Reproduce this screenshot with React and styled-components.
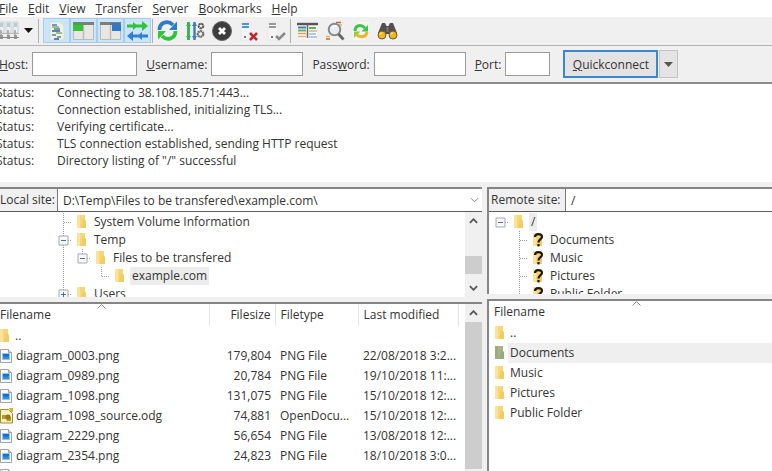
/**
 *
 * App
 *
 */

import React from 'react';
import styled, { createGlobalStyle } from 'styled-components';

const GlobalStyle = createGlobalStyle`
  * {
    box-sizing: border-box;
  }

  body {
    background: #fff;
    color: #333;
    font-family: "Open Sans", "Noto Sans", sans-serif;
    font-size: 12px;
    margin: 0;
    overflow: hidden;
  }

  button, input, select {
    color: inherit;
    font: inherit;
  }
`;

const Shell = styled.div`
  background: #f0f0f0;
  display: flex;
  flex-direction: column;
  height: 100vh;
  margin-left: -4px;
  overflow: hidden;
`;

const MenuBar = styled.nav`
  background: #fff;
  display: flex;
  gap: 10px;
  height: 17px;
  padding-left: 3px;
`;

const MenuItem = styled.button`
  background: none;
  border: 0;
  line-height: 16px;
  padding: 0;
`;

const ToolBar = styled.div`
  align-items: center;
  border-bottom: 1px solid #b4b4b4;
  display: flex;
  height: 29px;
  padding-bottom: 1px;
`;

const ToolButton = styled.button`
  align-items: center;
  background: ${props => props.$pressed ? '#cce4f7' : 'none'};
  border: ${props => props.$pressed ? '1px solid #a6cdf0' : '0'};
  display: flex;
  flex: none;
  height: 25px;
  justify-content: center;
  padding: 0;
  width: ${props => props.$width || 27}px;
`;

const Separator = styled.div`
  background: #b0b0b0;
  height: 24px;
  margin: 0 ${props => props.$after || 1}px 0 1px;
  width: 1px;
`;

const ConnectBar = styled.form`
  align-items: center;
  border-bottom: 2px solid #8c8c8c;
  display: flex;
  height: 38px;
  padding-left: 3px;
`;

const Field = styled.label`
  align-items: center;
  display: flex;
  gap: 4px;
  margin-right: 9px;
`;

const FieldInput = styled.input`
  background: #fff;
  border: 1px solid #9a9a9a;
  height: 24px;
  padding: 0 4px;
  width: ${props => props.$width}px;
`;

const ConnectButton = styled.button`
  background: #e3e3e3;
  border: 2px solid #3a87cf;
  height: 28px;
  margin-left: 4px;
  padding: 0;
  width: 95px;
`;

const HistoryButton = styled.button`
  align-items: center;
  background: #e4e4e4;
  border: 1px solid #c4c4c4;
  display: flex;
  height: 28px;
  justify-content: center;
  margin-left: 1px;
  padding: 0;
  width: 19px;
`;

const Log = styled.div`
  background: #fff;
  flex: none;
  height: 98px;
  line-height: 17px;
`;

const LogLine = styled.div`
  display: grid;
  grid-template-columns: 61px 1fr;
`;

const Panes = styled.div`
  display: grid;
  flex: 1;
  gap: 5px;
  grid-template-columns: 486fr 285fr;
  min-height: 0;
  padding-top: 5px;
`;

const Pane = styled.section`
  display: flex;
  flex-direction: column;
  min-height: 0;
  min-width: 0;
`;

const Box = styled.div`
  background: #fff;
  border-left: 2px solid #858585;
  border-top: 2px solid #858585;
  display: flex;
  flex-direction: column;
  min-height: 0;
`;

const TopBox = styled(Box)`
  flex: none;
  height: ${props => props.$height}px;
  margin-bottom: ${props => props.$gap}px;
`;

const FileBox = styled(Box)`
  flex: 1;
  flex-direction: row;
  overflow: hidden;
`;

const SiteRow = styled.div`
  border-bottom: 1px solid #5c5c5c;
  display: flex;
  flex: none;
  height: 23px;
`;

const SiteLabel = styled.label`
  background: #f0f0f0;
  border-right: 1px solid #777;
  line-height: 22px;
  padding-left: 2px;
  white-space: nowrap;
  width: ${props => props.$width}px;
`;

const SitePath = styled.div`
  align-items: center;
  display: flex;
  flex: 1;
  min-width: 0;
  padding-right: 3px;
`;

const SiteSelect = styled.select`
  appearance: none;
  background: none;
  border: 0;
  flex: 1;
  height: 22px;
  min-width: 0;
  outline: 0;
  padding: 0 5px;
`;

const TreeArea = styled.div`
  display: flex;
  flex: 1;
  min-height: 0;
  overflow: hidden;
`;

const Tree = styled.div`
  flex: 1;
  min-width: 0;
  padding: 1px 0 0 ${props => props.$left}px;
`;

const TreeRow = styled.div`
  display: flex;
  height: 18px;
`;

const TreeIcon = styled.span`
  flex: none;
  padding: 2px 0 0 3px;
  width: 19px;
`;

const TreeName = styled.span`
  background: ${props => props.$selected ? '#ececec' : 'none'};
  line-height: 18px;
  padding: 0 2px;
`;

const ScrollBar = styled.div`
  background: #f0f0f0;
  display: flex;
  flex: none;
  flex-direction: column;
  width: 17px;
`;

const ScrollButton = styled.button`
  align-items: center;
  background: none;
  border: 0;
  display: flex;
  flex: none;
  height: 18px;
  justify-content: center;
  padding: 0;
`;

const ScrollThumb = styled.div`
  background: #cdcdcd;
  flex: ${props => props.$fill ? '1' : 'none'};
  height: 18px;
  margin: ${props => props.$fill ? '0 0 2px' : 'auto 0 5px'};
`;

const TableWrapper = styled.div`
  flex: 1;
  min-width: 0;
  position: relative;
`;

const FileTable = styled.table`
  border-collapse: collapse;
  table-layout: fixed;
  width: 100%;
`;

const HeadCell = styled.th`
  border-right: ${props => props.$last ? '0' : '1px solid #e5e5e5'};
  font-weight: 400;
  height: 22px;
  line-height: 22px;
  padding: 0 ${props => props.$right ? 4 : 5}px;
  padding-left: ${props => props.$left || 5}px;
  text-align: ${props => props.$right ? 'right' : 'left'};
`;

const Cell = styled.td`
  height: 20px;
  line-height: 20px;
  padding: 0 ${props => props.$right ? 4 : 0}px 0 ${props => props.$right ? 0 : 5}px;
  text-align: ${props => props.$right ? 'right' : 'left'};
  white-space: nowrap;
`;

const NameCell = styled.td`
  padding: 0 0 0 ${props => props.$left}px;
`;

const NameInner = styled.div`
  align-items: center;
  display: flex;
  height: 20px;

  svg {
    flex: none;
  }
`;

const Name = styled.span`
  background: ${props => props.$selected ? '#efefef' : 'none'};
  flex: 1;
  line-height: 20px;
  padding-left: 2px;
  white-space: nowrap;
`;

const SortMark = styled.svg`
  left: ${props => props.$left}px;
  position: absolute;
  top: 0;
`;

/* icons */

const FolderIcon = ({ selected, unknown }) => (
  <svg width="14" height="14" viewBox="0 0 14 14">
    <path d="M1 0h8v5l1 1v7H1z" fill={selected ? '#a9b585' : '#f6d675'} />
    <path d="M1 0h3v13H1z" fill={selected ? '#9bab7c' : '#fbe49a'} />
    <path d="M7 4l3 2v7H5z" fill={selected ? '#93a574' : '#efc75c'} opacity=".7" />
    {unknown && (
      <g fill="none" stroke="#1c1808" strokeWidth="2.2">
        <path d="M3 4C3 0.200 10 0.200 10 3.800C10 6.400 6.500 6 6.500 9.500" />
        <path d="M6.500 11v2.400" />
      </g>
    )}
  </svg>
);

const PngIcon = () => (
  <svg width="15" height="16" viewBox="0 0 15 16">
    <path d="M1.500 1.500h8l3 3v10h-11z" fill="#fafafa" stroke="#a2a2a2" />
    <path d="M9.500 1.500v3h3" fill="#ddd" stroke="#a2a2a2" />
    <path d="M3.500 5.500h7v6h-7z" fill="#2f8fe6" stroke="#8cc4f2" />
    <path d="M4 6h6v2l-3 1-3-1z" fill="#1c6fc4" />
  </svg>
);

const OdgIcon = () => (
  <svg width="15" height="16" viewBox="0 0 15 16">
    <path d="M1.500 1.500h8l4 4v9.500h-12z" fill="#f4eec2" stroke="#a08d2c" />
    <path d="M10 0h4v4h-2z" fill="#d6b32b" />
    <path d="M3 7h5l1 2h3v4H8l-1-2H3z" fill="#b89a1e" />
    <circle cx="9" cy="9" r="2.500" fill="#8c7a1b" />
  </svg>
);

const Chevron = ({ up, size = 9, color = '#555', weight = 2 }) => (
  <svg width={size} height="6" viewBox="0 0 10 6">
    <path d={up ? 'M1 5l4-4 4 4' : 'M1 1l4 4 4-4'} fill="none" stroke={color} strokeWidth={weight} />
  </svg>
);

const Arrow = ({ color = '#111' }) => (
  <svg width="9" height="5" viewBox="0 0 9 5">
    <path d="M0 0h9L4.500 5z" fill={color} />
  </svg>
);

const SitesIcon = () => (
  <svg width="22" height="20" viewBox="0 0 22 20">
    {[2, 9, 16].map(x => (
      <g key={x}>
        <path d={`M${x} 1h5v11h-5z`} fill="#eef0f2" stroke="#c2c7cb" strokeWidth=".8" />
        <path d={`M${x + 1} 3h3M${x + 1} 5h3`} stroke="#7fa3c9" />
        <path d={`M${x + 2} 9v8`} stroke="#777" />
        <path d={`M${x + 1} 14h3v4h-3z`} fill="#999" />
      </g>
    ))}
    <path d="M0 16.500h22" stroke="#888" />
    <path d="M0 12.500h22" stroke="#b5b5b5" />
  </svg>
);

const LogIcon = () => (
  <svg width="20" height="20" viewBox="0 0 20 20">
    <path d="M3 1h10l4 4v14H3z" fill="#edf1e8" stroke="#ccd6d8" strokeWidth=".7" />
    <path d="M5 4h5M7 8h6M5 14h4M10 16h4" stroke="#4c82a8" strokeWidth="1.500" />
    <path d="M5 6h7M9 12h6" stroke="#8caa62" strokeWidth="1.300" />
    <path d="M5 10h8M7 18h5" stroke="#345f91" strokeWidth="1.300" />
  </svg>
);

const PaneIcon = ({ remote }) => (
  <svg width="21" height="20" viewBox="0 0 21 20">
    <path d="M.5 1.500h20v17H.500z" fill="#e9e7e4" stroke="#bbb" />
    <path d="M10.500 4v15" stroke="#bbb" strokeWidth="1.500" />
    {remote
      ? <path d="M12 4h9v6h-9z" fill="#2879cf" />
      : <path d="M0 4h10v6H0z" fill="#35c437" />}
    <path d="M0 1h21v3H0z" fill="#7d7d7d" />
    {remote
      ? <path d="M11 2h9v2h-9z" fill="#3f74ac" />
      : <path d="M1 2h9v2H1z" fill="#4ba04d" />}
  </svg>
);

const QueueIcon = () => (
  <svg width="21" height="20" viewBox="0 0 21 20">
    <path d="M0 3.500h6V1l3 2.500h6V0l6 5-6 5V6.500H9L6 9V6.500H0z" fill="#2fc43a" />
    <path d="M21 13.500h-6V11l-3 2.500H6V10l-6 5 6 5v-3.500h6l3 2.500v-2.500h6z" fill="#2e7fd1" />
  </svg>
);

const RefreshIcon = () => (
  <svg width="21" height="21" viewBox="0 0 21 21">
    <path d="M2.500 10C2.500 2 11 0 16 5" fill="none" stroke="#2b7cc9" strokeWidth="3.800" />
    <path d="M20 1.500v8.500h-8z" fill="#2b7cc9" />
    <path d="M18.500 11C18.500 19 10 21 5 16" fill="none" stroke="#2fc43a" strokeWidth="3.800" />
    <path d="M1 19.500v-8.500h8z" fill="#2fc43a" />
  </svg>
);

const SyncIcon = () => (
  <svg width="18" height="20" viewBox="0 0 18 20">
    <path d="M5 1h12v13H5z" fill="#faf8e6" />
    <path d="M1 5h12v14H1z" fill="#f7f7f7" />
    <path d="M3 10C3 4 9 3 13 7" fill="none" stroke="#3cc353" strokeWidth="3" />
    <path d="M16 4v6.500h-6.500z" fill="#3cc353" />
    <path d="M15 11C14.500 16 9 17 5 14" fill="none" stroke="#ecb52b" strokeWidth="3" />
    <path d="M2 17v-6.500h6.500z" fill="#9ccb35" />
  </svg>
);

const ProcessIcon = () => (
  <svg width="20" height="20" viewBox="0 0 20 20">
    <path d="M3.500 1v18M9.500 1v18" stroke="#397fc2" strokeWidth="2.400" />
    <path d="M3.500 1v18" stroke="#32b84a" strokeWidth="2.400" />
    <path d="M1 5l2.500-4L6 5zM1 15l2.500 4L6 15z" fill="#32b84a" />
    <path d="M7 5l2.500-4L12 5zM7 15l2.500 4 2.500-4z" fill="#397fc2" />
    <circle cx="16" cy="5" r="2.300" fill="none" stroke="#555" strokeWidth="2" strokeDasharray="2 .5" />
    <circle cx="15.500" cy="13" r="2.800" fill="none" stroke="#6a6a6a" strokeWidth="2.200" strokeDasharray="2 .5" />
  </svg>
);

const CancelIcon = () => (
  <svg width="20" height="20" viewBox="0 0 20 20">
    <circle cx="10" cy="10" r="9.500" fill="#3d3d3d" stroke="#666" />
    <path d="M7 7l6 6M13 7l-6 6" stroke="#fff" strokeWidth="2.800" />
  </svg>
);

const ServerIcon = ({ ok }) => (
  <svg width="20" height="20" viewBox="0 0 20 20">
    <path d="M2 1h10v18H2z" fill="#f4f4f5" stroke="#e2e2e2" strokeWidth=".7" />
    <path d="M3 3h7M3 6h7" stroke={ok ? '#989898' : '#4b94d9'} strokeWidth="2" />
    <path d="M5 15h2v2H5z" fill="#777" />
    {ok
      ? <path d="M10 15l3 3 6-6" fill="none" stroke="#8a8a8a" strokeWidth="2.600" />
      : <path d="M11 12l7 7M18 12l-7 7" stroke="#c1262e" strokeWidth="2.600" />}
  </svg>
);

const FilterIcon = () => (
  <svg width="21" height="18" viewBox="0 0 21 18">
    <path d="M1 4h19v13H1z" fill="#fafaf6" />
    <path d="M0 2h21" stroke="#555" strokeWidth="2.400" />
    <path d="M10.500 2v14" stroke="#666" strokeWidth="1.500" />
    <path d="M1 5.500h8" stroke="#4778b4" strokeWidth="2" />
    <path d="M1 8.500h8M12 6h7" stroke="#58b756" strokeWidth="2" />
    <path d="M1 11.500h8" stroke="#d9a54a" strokeWidth="1.500" />
    <path d="M1 14.500h8M12 9h8" stroke="#e3a9a9" strokeWidth="1.500" />
    <path d="M12 12h7M12 15h8" stroke="#9bb7df" strokeWidth="1.500" />
  </svg>
);

const SearchIcon = () => (
  <svg width="20" height="20" viewBox="0 0 20 20">
    <path d="M11 1.500h5M1 18h4" stroke="#d65b3c" strokeWidth="1.500" />
    <path d="M13 4h4M1 15.500h4" stroke="#d5b94d" strokeWidth="1.500" />
    <circle cx="9.500" cy="8.500" r="5.800" fill="#e9edf0" stroke="#888" strokeWidth="2" />
    <path d="M7 7.500c1-2 3-3 5-2" fill="none" stroke="#fff" strokeWidth="1.500" />
    <path d="M13.500 13l5 5.500" stroke="#666" strokeWidth="2.800" />
  </svg>
);

const BinocularsIcon = () => (
  <svg width="21" height="18" viewBox="0 0 21 18">
    <path d="M5 1h3l1.500 3h2L13 1h3l4 10-4 4-4-3H9l-4 3-4-4z" fill="#505050" />
    <path d="M9.500 5h2v5h-2z" fill="#777" />
    <circle cx="5" cy="13" r="4" fill="#f1b51e" stroke="#6b5c30" />
    <circle cx="16" cy="13" r="4" fill="#f1b51e" stroke="#6b5c30" />
    <path d="M3 12l2-1M14 12l2-1" stroke="#ffe58a" strokeWidth="1.500" />
  </svg>
);

const GUIDES = {
  line: 'M9.500 0v18',
  tee: 'M9.500 0v18M10 9.500h8',
  elbow: 'M9.500 0v9.500h8',
  root: 'M10 9.500h8',
};

const Guide = ({ kind, box }) => (
  <svg width="19" height="18" viewBox="0 0 19 18">
    <path d={GUIDES[kind]} fill="none" stroke="#999" strokeDasharray="1 1" />
    {box && (
      <g>
        <path d="M5 5h9v9H5z" fill="#f7f8fa" stroke="#a3abb6" />
        <path d={box === 'plus' ? 'M7 9.500h5M9.500 7v5' : 'M7 9.500h5'} stroke="#4f6ca3" />
      </g>
    )}
  </svg>
);

/* data */

const menus = [['', 'F', 'ile'], ['', 'E', 'dit'], ['', 'V', 'iew'], ['', 'T', 'ransfer'], ['', 'S', 'erver'], ['', 'B', 'ookmarks'], ['', 'H', 'elp']];

const fields = [
  { id: 'host', text: ['', 'H', 'ost:'], width: 105 },
  { id: 'user', text: ['', 'U', 'sername:'], width: 92 },
  { id: 'pass', text: ['Pass', 'w', 'ord:'], width: 92 },
  { id: 'port', text: ['', 'P', 'ort:'], width: 45 },
];

const messages = [
  'Connecting to 38.108.185.71:443...',
  'Connection established, initializing TLS...',
  'Verifying certificate...',
  'TLS connection established, sending HTTP request',
  'Directory listing of "/" successful',
];

const localTree = [
  { name: 'System Volume Information', guides: [['tee']] },
  { name: 'Temp', guides: [['tee', 'minus']] },
  { name: 'Files to be transfered', guides: [['line'], ['elbow', 'minus']] },
  { name: 'example.com', guides: [['line'], [''], ['elbow']], selected: true },
  { name: 'Users', guides: [['tee', 'plus']] },
];

const remoteTree = [
  { name: '/', guides: [['root', 'minus']], selected: true },
  { name: 'Documents', guides: [[''], ['tee']], unknown: true },
  { name: 'Music', guides: [[''], ['tee']], unknown: true },
  { name: 'Pictures', guides: [[''], ['tee']], unknown: true },
  { name: 'Public Folder', guides: [[''], ['tee']], unknown: true },
];

const localFiles = [
  ['..', '', '', '', FolderIcon],
  ['diagram_0003.png', '179,804', 'PNG File', '22/08/2018 3:2...', PngIcon],
  ['diagram_0989.png', '20,784', 'PNG File', '19/10/2018 11:...', PngIcon],
  ['diagram_1098.png', '131,075', 'PNG File', '15/10/2018 12:...', PngIcon],
  ['diagram_1098_source.odg', '74,881', 'OpenDocu...', '15/10/2018 12:...', OdgIcon],
  ['diagram_2229.png', '56,654', 'PNG File', '13/08/2018 12:...', PngIcon],
  ['diagram_2354.png', '24,823', 'PNG File', '18/10/2018 3:0...', PngIcon],
  ['', '', '', '', PngIcon],
];

const remoteFiles = ['..', 'Documents', 'Music', 'Pictures', 'Public Folder'];

const Mnemonic = ({ text }) => (
  <span>{text[0]}<u>{text[1]}</u>{text[2]}</span>
);

const TreeView = ({ rows, left }) => (
  <Tree $left={left}>
    {rows.map(row => (
      <TreeRow key={row.name}>
        {row.guides.map(([kind, box], i) => <Guide key={i} kind={kind} box={box} />)}
        <TreeIcon><FolderIcon unknown={row.unknown} /></TreeIcon>
        <TreeName $selected={row.selected}>{row.name}</TreeName>
      </TreeRow>
    ))}
  </Tree>
);

const Sort = ({ left }) => (
  <SortMark $left={left} width="9" height="5" viewBox="0 0 9 5">
    <path d="M.5 4.500l4-4 4 4" fill="none" stroke="#888" />
  </SortMark>
);

class App extends React.Component {

  constructor(props) {
    super(props)

    this.state = {
      selected: 'Documents',
    }
  }

  renderLocal() {
    return (
      <Pane>
        <TopBox $height={110} $gap={5}>
          <SiteRow>
            <SiteLabel htmlFor="local" $width={60}>Local site:</SiteLabel>
            <SitePath>
              <SiteSelect id="local">
                <option>D:\Temp\Files to be transfered\example.com\</option>
              </SiteSelect>
              <Chevron color="#777" weight={1} />
            </SitePath>
          </SiteRow>
          <TreeArea>
            <TreeView rows={localTree} left={56} />
            <ScrollBar>
              <ScrollButton aria-label="Scroll up"><Chevron up /></ScrollButton>
              <ScrollThumb />
              <ScrollButton aria-label="Scroll down"><Chevron /></ScrollButton>
            </ScrollBar>
          </TreeArea>
        </TopBox>
        <FileBox>
          <TableWrapper>
            <Sort left={99} />
            <FileTable>
              <colgroup>
                <col />
                <col width="66" />
                <col width="83" />
                <col width="100" />
                <col width="7" />
              </colgroup>
              <thead>
                <tr>
                  <HeadCell $left={2}>Filename</HeadCell>
                  <HeadCell $right>Filesize</HeadCell>
                  <HeadCell>Filetype</HeadCell>
                  <HeadCell>Last modified</HeadCell>
                  <HeadCell $last />
                </tr>
              </thead>
              <tbody>
                {localFiles.map(([name, size, type, modified, Icon]) => (
                  <tr key={name}>
                    <NameCell $left={1}>
                      <NameInner><Icon /><Name>{name}</Name></NameInner>
                    </NameCell>
                    <Cell $right>{size}</Cell>
                    <Cell>{type}</Cell>
                    <Cell>{modified}</Cell>
                    <td />
                  </tr>
                ))}
              </tbody>
            </FileTable>
          </TableWrapper>
          <ScrollBar>
            <ScrollButton aria-label="Scroll up"><Chevron up /></ScrollButton>
            <ScrollThumb $fill />
          </ScrollBar>
        </FileBox>
      </Pane>
    );
  }

  renderRemote() {
    return (
      <Pane>
        <TopBox $height={107} $gap={5}>
          <SiteRow>
            <SiteLabel htmlFor="remote" $width={77}>Remote site:</SiteLabel>
            <SitePath>
              <SiteSelect id="remote">
                <option>/</option>
              </SiteSelect>
            </SitePath>
          </SiteRow>
          <TreeArea>
            <TreeView rows={remoteTree} left={2} />
          </TreeArea>
        </TopBox>
        <FileBox>
          <TableWrapper>
            <Sort left={143} />
            <FileTable>
              <thead>
                <tr><HeadCell $last>Filename</HeadCell></tr>
              </thead>
              <tbody>
                {remoteFiles.map(name => {
                  const selected = name === this.state.selected;

                  return (
                    <tr key={name} onClick={() => this.setState({ selected: name })}>
                      <NameCell $left={5}>
                        <NameInner>
                          <FolderIcon selected={selected} />
                          <Name $selected={selected}>{name}</Name>
                        </NameInner>
                      </NameCell>
                    </tr>
                  );
                })}
              </tbody>
            </FileTable>
          </TableWrapper>
        </FileBox>
      </Pane>
    );
  }

  render() {
    return (
      <Shell>
        <GlobalStyle />
        <MenuBar>
          {menus.map(text => (
            <MenuItem key={text[2]}><Mnemonic text={text} /></MenuItem>
          ))}
        </MenuBar>
        <ToolBar>
          <ToolButton $width={24} aria-label="Site Manager"><SitesIcon /></ToolButton>
          <ToolButton $width={17} aria-label="Site list"><Arrow /></ToolButton>
          <Separator $after={4} />
          <ToolButton $pressed aria-label="Message log"><LogIcon /></ToolButton>
          <ToolButton $pressed aria-label="Local tree"><PaneIcon /></ToolButton>
          <ToolButton $pressed aria-label="Remote tree"><PaneIcon remote /></ToolButton>
          <ToolButton $pressed aria-label="Transfer queue"><QueueIcon /></ToolButton>
          <Separator />
          <ToolButton aria-label="Refresh"><RefreshIcon /></ToolButton>
          <ToolButton aria-label="Process queue"><ProcessIcon /></ToolButton>
          <ToolButton aria-label="Cancel"><CancelIcon /></ToolButton>
          <ToolButton aria-label="Disconnect"><ServerIcon /></ToolButton>
          <ToolButton aria-label="Reconnect"><ServerIcon ok /></ToolButton>
          <Separator $after={3} />
          <ToolButton aria-label="Filters"><FilterIcon /></ToolButton>
          <ToolButton aria-label="Compare"><SearchIcon /></ToolButton>
          <ToolButton $width={26} aria-label="Synchronized browsing"><SyncIcon /></ToolButton>
          <ToolButton $width={26} aria-label="Find files"><BinocularsIcon /></ToolButton>
        </ToolBar>
        <ConnectBar onSubmit={e => e.preventDefault()}>
          {fields.map(field => (
            <Field key={field.id} htmlFor={field.id}>
              <Mnemonic text={field.text} />
              <FieldInput
                id={field.id}
                type={field.id === 'pass' ? 'password' : 'text'}
                $width={field.width}
              />
            </Field>
          ))}
          <ConnectButton><Mnemonic text={['', 'Q', 'uickconnect']} /></ConnectButton>
          <HistoryButton type="button" aria-label="History"><Arrow color="#555" /></HistoryButton>
        </ConnectBar>
        <Log>
          {messages.map(message => (
            <LogLine key={message}>
              <span>Status:</span>
              <span>{message}</span>
            </LogLine>
          ))}
        </Log>
        <Panes>
          {this.renderLocal()}
          {this.renderRemote()}
        </Panes>
      </Shell>
    );
  }
}

export default App;
